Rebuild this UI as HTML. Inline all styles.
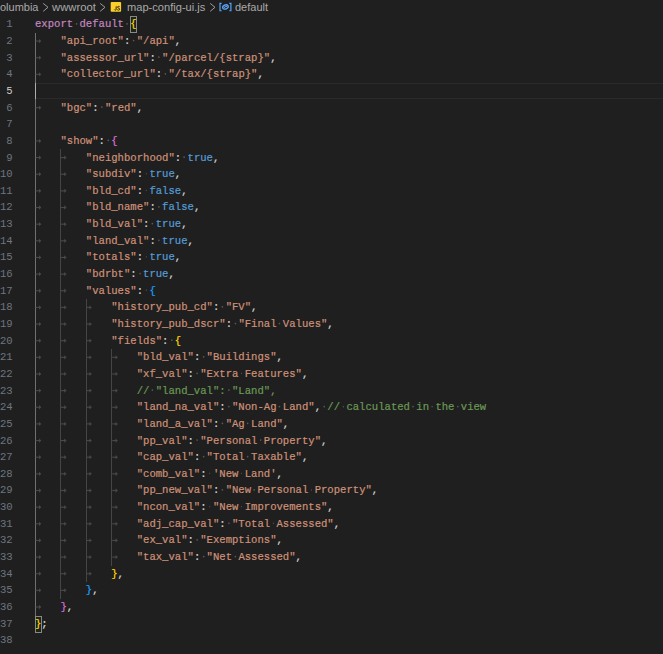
<!DOCTYPE html>
<html><head><meta charset="utf-8"><title>map-config-ui.js</title>
<style>
html,body{margin:0;padding:0;background:#1f1f1f;}
body{width:663px;height:654px;overflow:hidden;position:relative;font-family:"Liberation Sans",sans-serif;}
#ed{position:absolute;left:0;top:16px;width:813.89px;height:728.23px;transform-origin:0 0;transform:scale(0.8146110033172687,0.8761);
 font-family:"Liberation Mono",monospace;font-size:13.0px;line-height:19.0px;color:#d4d4d4;-webkit-text-stroke:0.25px;}
.ln{position:absolute;left:0;width:15.47px;text-align:right;color:#6e7681;height:19.0px;-webkit-text-stroke:0;}
.ln.a{color:#cccccc;}
.cl{position:absolute;left:42.97px;height:19.0px;white-space:pre;}
.cl span,.cl i{position:relative;top:0.0px}
.k{color:#c586c0} .s{color:#ce9178} .l{color:#569cd6} .c{color:#6a9955} .p{color:#d4d4d4}
.b1{color:#ffd700} .b2{color:#da70d6} .b3{color:#179fff}
.mb{position:absolute;width:7px;height:17px;box-sizing:border-box;border:1px solid #888;background:rgba(0,100,0,0.1);}
i{font-style:normal}
i.sp{display:inline-block;width:7.8013px;height:19.0px;vertical-align:top;position:relative;}
i.sp::after{content:"";position:absolute;left:3.05px;top:8.40px;width:1.7px;height:1.8px;background:#585858;border-radius:50%;}
i.tab{display:inline-block;width:31.2051px;height:19.0px;vertical-align:top;position:relative;}
i.tab svg{position:absolute;left:0;top:6px;display:block;overflow:visible;}
.g{position:absolute;width:1px;background:#454545;}
.g.a{background:#707070;}
#hl{position:absolute;left:35px;right:0;top:82.55px;height:16.7px;box-sizing:border-box;border-top:1.7px solid #2a2a2a;border-bottom:1.7px solid #2a2a2a;}
#cur{position:absolute;left:35px;top:83px;width:1.3px;height:16px;background:#aeafad;}
#bc{position:absolute;left:0;top:0;height:16px;width:663px;color:#a9a9a9;white-space:nowrap;overflow:hidden;}
.bt{position:absolute;top:-0.2px;font-size:11.7px;line-height:14px;height:14px;transform-origin:0 0;}
.bi{position:absolute;display:block;}
</style></head><body>

<div id="bc">
<span class="bt" style="left:0.04px;transform:scaleX(0.9387)">olumbia</span>
<svg class="bi" style="left:42.00px;top:2.3px" width="8" height="11" viewBox="0 0 8 11"><path d="M1.2 1.4 L6.0 5.3 L1.2 9.3" fill="none" stroke="#9c9c9c" stroke-width="1.0"/></svg>
<span class="bt" style="left:52.02px;transform:scaleX(0.9661)">wwwroot</span>
<svg class="bi" style="left:98.90px;top:2.3px" width="8" height="11" viewBox="0 0 8 11"><path d="M1.2 1.4 L6.0 5.3 L1.2 9.3" fill="none" stroke="#9c9c9c" stroke-width="1.0"/></svg>
<svg class="bi" style="left:110px;top:1px" width="12" height="12" viewBox="0 0 12 12"><rect x="0.7" y="0.9" width="10.4" height="9.8" rx="0.9" fill="#fdcf2c"/><path d="M6.15 5.3 V8.2 Q6.15 9.15 5.3 9.15 Q4.7 9.15 4.4 8.6" fill="none" stroke="#2b2405" stroke-width="1.0"/><path d="M9.7 5.9 Q9.3 5.3 8.5 5.35 Q7.5 5.45 7.55 6.2 Q7.6 6.9 8.6 7.15 Q9.7 7.45 9.65 8.25 Q9.6 9.1 8.6 9.15 Q7.7 9.15 7.2 8.5" fill="none" stroke="#2b2405" stroke-width="1.0"/></svg>
<span class="bt" style="left:127.46px;transform:scaleX(0.9499)">map-config-ui.js</span>
<svg class="bi" style="left:208.80px;top:2.3px" width="8" height="11" viewBox="0 0 8 11"><path d="M1.2 1.4 L6.0 5.3 L1.2 9.3" fill="none" stroke="#9c9c9c" stroke-width="1.0"/></svg>
<svg class="bi" style="left:218.8px;top:1.7px" width="14" height="10" viewBox="0 0 14 10"><path d="M2.6 1.3 H1.0 V8.7 H2.6 M10.3 1.3 H11.9 V8.7 H10.3" fill="none" stroke="#55a8ff" stroke-width="1.15"/><g transform="rotate(-24 6.45 5.0)"><ellipse cx="6.45" cy="5.0" rx="2.9" ry="2.0" fill="none" stroke="#5aabff" stroke-width="1.3"/><path d="M4.7 5.4 Q6.3 4.0 8.1 5.3" fill="none" stroke="#5aabff" stroke-width="0.9"/></g></svg>
<span class="bt" style="left:234.74px;transform:scaleX(0.9406)">default</span>
</div>
<div id="hl"></div>
<div class="mb" style="left:130px;top:16px"></div><div class="mb" style="left:35px;top:616px"></div>
<div class="g a" style="left:35px;top:32.90px;height:582.61px"></div>
<div class="g" style="left:60px;top:149.42px;height:449.44px"></div>
<div class="g" style="left:86px;top:299.23px;height:282.98px"></div>
<div class="g" style="left:111px;top:349.17px;height:216.40px"></div>
<div id="cur"></div>
<div id="ed">
<div id="deco" style="position:absolute;left:0;top:0.285px;width:100%;height:100%">
</div>
<div class="ln" style="top:0.0px">1</div><div class="cl" style="top:0.0px"><span class="k">export</span><i class="sp"> </i><span class="k">default</span><i class="sp"> </i><span class="b1">{</span></div>
<div class="ln" style="top:19.0px">2</div><div class="cl" style="top:19.0px"><i class="tab"><svg width="9" height="6" viewBox="0 0 9 6"><g transform="translate(0 0.6)"><path d="M0.8 3H6" stroke="#484848" stroke-width="1.3" fill="none"/><path d="M4.9 0.55L7.75 3L4.9 5.45Z" fill="#484848"/></g></svg></i><span class="s">"api_root"</span><span class="p">:</span><i class="sp"> </i><span class="s">"/api"</span><span class="p">,</span></div>
<div class="ln" style="top:38.0px">3</div><div class="cl" style="top:38.0px"><i class="tab"><svg width="9" height="6" viewBox="0 0 9 6"><g transform="translate(0 0.6)"><path d="M0.8 3H6" stroke="#484848" stroke-width="1.3" fill="none"/><path d="M4.9 0.55L7.75 3L4.9 5.45Z" fill="#484848"/></g></svg></i><span class="s">"assessor_url"</span><span class="p">:</span><i class="sp"> </i><span class="s">"/parcel/{strap}"</span><span class="p">,</span></div>
<div class="ln" style="top:57.0px">4</div><div class="cl" style="top:57.0px"><i class="tab"><svg width="9" height="6" viewBox="0 0 9 6"><g transform="translate(0 0.6)"><path d="M0.8 3H6" stroke="#484848" stroke-width="1.3" fill="none"/><path d="M4.9 0.55L7.75 3L4.9 5.45Z" fill="#484848"/></g></svg></i><span class="s">"collector_url"</span><span class="p">:</span><i class="sp"> </i><span class="s">"/tax/{strap}"</span><span class="p">,</span></div>
<div class="ln a" style="top:76.0px">5</div><div class="cl" style="top:76.0px"></div>
<div class="ln" style="top:95.0px">6</div><div class="cl" style="top:95.0px"><i class="tab"><svg width="9" height="6" viewBox="0 0 9 6"><g transform="translate(0 0.6)"><path d="M0.8 3H6" stroke="#484848" stroke-width="1.3" fill="none"/><path d="M4.9 0.55L7.75 3L4.9 5.45Z" fill="#484848"/></g></svg></i><span class="s">"bgc"</span><span class="p">:</span><i class="sp"> </i><span class="s">"red"</span><span class="p">,</span></div>
<div class="ln" style="top:114.0px">7</div><div class="cl" style="top:114.0px"></div>
<div class="ln" style="top:133.0px">8</div><div class="cl" style="top:133.0px"><i class="tab"><svg width="9" height="6" viewBox="0 0 9 6"><g transform="translate(0 0.6)"><path d="M0.8 3H6" stroke="#484848" stroke-width="1.3" fill="none"/><path d="M4.9 0.55L7.75 3L4.9 5.45Z" fill="#484848"/></g></svg></i><span class="s">"show"</span><span class="p">:</span><i class="sp"> </i><span class="b2">{</span></div>
<div class="ln" style="top:152.0px">9</div><div class="cl" style="top:152.0px"><i class="tab"><svg width="9" height="6" viewBox="0 0 9 6"><g transform="translate(0 0.6)"><path d="M0.8 3H6" stroke="#484848" stroke-width="1.3" fill="none"/><path d="M4.9 0.55L7.75 3L4.9 5.45Z" fill="#484848"/></g></svg></i><i class="tab"><svg width="9" height="6" viewBox="0 0 9 6"><g transform="translate(0 0.6)"><path d="M0.8 3H6" stroke="#484848" stroke-width="1.3" fill="none"/><path d="M4.9 0.55L7.75 3L4.9 5.45Z" fill="#484848"/></g></svg></i><span class="s">"neighborhood"</span><span class="p">:</span><i class="sp"> </i><span class="l">true</span><span class="p">,</span></div>
<div class="ln" style="top:171.0px">10</div><div class="cl" style="top:171.0px"><i class="tab"><svg width="9" height="6" viewBox="0 0 9 6"><g transform="translate(0 0.6)"><path d="M0.8 3H6" stroke="#484848" stroke-width="1.3" fill="none"/><path d="M4.9 0.55L7.75 3L4.9 5.45Z" fill="#484848"/></g></svg></i><i class="tab"><svg width="9" height="6" viewBox="0 0 9 6"><g transform="translate(0 0.6)"><path d="M0.8 3H6" stroke="#484848" stroke-width="1.3" fill="none"/><path d="M4.9 0.55L7.75 3L4.9 5.45Z" fill="#484848"/></g></svg></i><span class="s">"subdiv"</span><span class="p">:</span><i class="sp"> </i><span class="l">true</span><span class="p">,</span></div>
<div class="ln" style="top:190.0px">11</div><div class="cl" style="top:190.0px"><i class="tab"><svg width="9" height="6" viewBox="0 0 9 6"><g transform="translate(0 0.6)"><path d="M0.8 3H6" stroke="#484848" stroke-width="1.3" fill="none"/><path d="M4.9 0.55L7.75 3L4.9 5.45Z" fill="#484848"/></g></svg></i><i class="tab"><svg width="9" height="6" viewBox="0 0 9 6"><g transform="translate(0 0.6)"><path d="M0.8 3H6" stroke="#484848" stroke-width="1.3" fill="none"/><path d="M4.9 0.55L7.75 3L4.9 5.45Z" fill="#484848"/></g></svg></i><span class="s">"bld_cd"</span><span class="p">:</span><i class="sp"> </i><span class="l">false</span><span class="p">,</span></div>
<div class="ln" style="top:209.0px">12</div><div class="cl" style="top:209.0px"><i class="tab"><svg width="9" height="6" viewBox="0 0 9 6"><g transform="translate(0 0.6)"><path d="M0.8 3H6" stroke="#484848" stroke-width="1.3" fill="none"/><path d="M4.9 0.55L7.75 3L4.9 5.45Z" fill="#484848"/></g></svg></i><i class="tab"><svg width="9" height="6" viewBox="0 0 9 6"><g transform="translate(0 0.6)"><path d="M0.8 3H6" stroke="#484848" stroke-width="1.3" fill="none"/><path d="M4.9 0.55L7.75 3L4.9 5.45Z" fill="#484848"/></g></svg></i><span class="s">"bld_name"</span><span class="p">:</span><i class="sp"> </i><span class="l">false</span><span class="p">,</span></div>
<div class="ln" style="top:228.0px">13</div><div class="cl" style="top:228.0px"><i class="tab"><svg width="9" height="6" viewBox="0 0 9 6"><g transform="translate(0 0.6)"><path d="M0.8 3H6" stroke="#484848" stroke-width="1.3" fill="none"/><path d="M4.9 0.55L7.75 3L4.9 5.45Z" fill="#484848"/></g></svg></i><i class="tab"><svg width="9" height="6" viewBox="0 0 9 6"><g transform="translate(0 0.6)"><path d="M0.8 3H6" stroke="#484848" stroke-width="1.3" fill="none"/><path d="M4.9 0.55L7.75 3L4.9 5.45Z" fill="#484848"/></g></svg></i><span class="s">"bld_val"</span><span class="p">:</span><i class="sp"> </i><span class="l">true</span><span class="p">,</span></div>
<div class="ln" style="top:247.0px">14</div><div class="cl" style="top:247.0px"><i class="tab"><svg width="9" height="6" viewBox="0 0 9 6"><g transform="translate(0 0.6)"><path d="M0.8 3H6" stroke="#484848" stroke-width="1.3" fill="none"/><path d="M4.9 0.55L7.75 3L4.9 5.45Z" fill="#484848"/></g></svg></i><i class="tab"><svg width="9" height="6" viewBox="0 0 9 6"><g transform="translate(0 0.6)"><path d="M0.8 3H6" stroke="#484848" stroke-width="1.3" fill="none"/><path d="M4.9 0.55L7.75 3L4.9 5.45Z" fill="#484848"/></g></svg></i><span class="s">"land_val"</span><span class="p">:</span><i class="sp"> </i><span class="l">true</span><span class="p">,</span></div>
<div class="ln" style="top:266.0px">15</div><div class="cl" style="top:266.0px"><i class="tab"><svg width="9" height="6" viewBox="0 0 9 6"><g transform="translate(0 0.6)"><path d="M0.8 3H6" stroke="#484848" stroke-width="1.3" fill="none"/><path d="M4.9 0.55L7.75 3L4.9 5.45Z" fill="#484848"/></g></svg></i><i class="tab"><svg width="9" height="6" viewBox="0 0 9 6"><g transform="translate(0 0.6)"><path d="M0.8 3H6" stroke="#484848" stroke-width="1.3" fill="none"/><path d="M4.9 0.55L7.75 3L4.9 5.45Z" fill="#484848"/></g></svg></i><span class="s">"totals"</span><span class="p">:</span><i class="sp"> </i><span class="l">true</span><span class="p">,</span></div>
<div class="ln" style="top:285.0px">16</div><div class="cl" style="top:285.0px"><i class="tab"><svg width="9" height="6" viewBox="0 0 9 6"><g transform="translate(0 0.6)"><path d="M0.8 3H6" stroke="#484848" stroke-width="1.3" fill="none"/><path d="M4.9 0.55L7.75 3L4.9 5.45Z" fill="#484848"/></g></svg></i><i class="tab"><svg width="9" height="6" viewBox="0 0 9 6"><g transform="translate(0 0.6)"><path d="M0.8 3H6" stroke="#484848" stroke-width="1.3" fill="none"/><path d="M4.9 0.55L7.75 3L4.9 5.45Z" fill="#484848"/></g></svg></i><span class="s">"bdrbt"</span><span class="p">:</span><i class="sp"> </i><span class="l">true</span><span class="p">,</span></div>
<div class="ln" style="top:304.0px">17</div><div class="cl" style="top:304.0px"><i class="tab"><svg width="9" height="6" viewBox="0 0 9 6"><g transform="translate(0 0.6)"><path d="M0.8 3H6" stroke="#484848" stroke-width="1.3" fill="none"/><path d="M4.9 0.55L7.75 3L4.9 5.45Z" fill="#484848"/></g></svg></i><i class="tab"><svg width="9" height="6" viewBox="0 0 9 6"><g transform="translate(0 0.6)"><path d="M0.8 3H6" stroke="#484848" stroke-width="1.3" fill="none"/><path d="M4.9 0.55L7.75 3L4.9 5.45Z" fill="#484848"/></g></svg></i><span class="s">"values"</span><span class="p">:</span><i class="sp"> </i><span class="b3">{</span></div>
<div class="ln" style="top:323.0px">18</div><div class="cl" style="top:323.0px"><i class="tab"><svg width="9" height="6" viewBox="0 0 9 6"><g transform="translate(0 0.6)"><path d="M0.8 3H6" stroke="#484848" stroke-width="1.3" fill="none"/><path d="M4.9 0.55L7.75 3L4.9 5.45Z" fill="#484848"/></g></svg></i><i class="tab"><svg width="9" height="6" viewBox="0 0 9 6"><g transform="translate(0 0.6)"><path d="M0.8 3H6" stroke="#484848" stroke-width="1.3" fill="none"/><path d="M4.9 0.55L7.75 3L4.9 5.45Z" fill="#484848"/></g></svg></i><i class="tab"><svg width="9" height="6" viewBox="0 0 9 6"><g transform="translate(0 0.6)"><path d="M0.8 3H6" stroke="#484848" stroke-width="1.3" fill="none"/><path d="M4.9 0.55L7.75 3L4.9 5.45Z" fill="#484848"/></g></svg></i><span class="s">"history_pub_cd"</span><span class="p">:</span><i class="sp"> </i><span class="s">"FV"</span><span class="p">,</span></div>
<div class="ln" style="top:342.0px">19</div><div class="cl" style="top:342.0px"><i class="tab"><svg width="9" height="6" viewBox="0 0 9 6"><g transform="translate(0 0.6)"><path d="M0.8 3H6" stroke="#484848" stroke-width="1.3" fill="none"/><path d="M4.9 0.55L7.75 3L4.9 5.45Z" fill="#484848"/></g></svg></i><i class="tab"><svg width="9" height="6" viewBox="0 0 9 6"><g transform="translate(0 0.6)"><path d="M0.8 3H6" stroke="#484848" stroke-width="1.3" fill="none"/><path d="M4.9 0.55L7.75 3L4.9 5.45Z" fill="#484848"/></g></svg></i><i class="tab"><svg width="9" height="6" viewBox="0 0 9 6"><g transform="translate(0 0.6)"><path d="M0.8 3H6" stroke="#484848" stroke-width="1.3" fill="none"/><path d="M4.9 0.55L7.75 3L4.9 5.45Z" fill="#484848"/></g></svg></i><span class="s">"history_pub_dscr"</span><span class="p">:</span><i class="sp"> </i><span class="s">"Final</span><i class="sp"> </i><span class="s">Values"</span><span class="p">,</span></div>
<div class="ln" style="top:361.0px">20</div><div class="cl" style="top:361.0px"><i class="tab"><svg width="9" height="6" viewBox="0 0 9 6"><g transform="translate(0 0.6)"><path d="M0.8 3H6" stroke="#484848" stroke-width="1.3" fill="none"/><path d="M4.9 0.55L7.75 3L4.9 5.45Z" fill="#484848"/></g></svg></i><i class="tab"><svg width="9" height="6" viewBox="0 0 9 6"><g transform="translate(0 0.6)"><path d="M0.8 3H6" stroke="#484848" stroke-width="1.3" fill="none"/><path d="M4.9 0.55L7.75 3L4.9 5.45Z" fill="#484848"/></g></svg></i><i class="tab"><svg width="9" height="6" viewBox="0 0 9 6"><g transform="translate(0 0.6)"><path d="M0.8 3H6" stroke="#484848" stroke-width="1.3" fill="none"/><path d="M4.9 0.55L7.75 3L4.9 5.45Z" fill="#484848"/></g></svg></i><span class="s">"fields"</span><span class="p">:</span><i class="sp"> </i><span class="b1">{</span></div>
<div class="ln" style="top:380.0px">21</div><div class="cl" style="top:380.0px"><i class="tab"><svg width="9" height="6" viewBox="0 0 9 6"><g transform="translate(0 0.6)"><path d="M0.8 3H6" stroke="#484848" stroke-width="1.3" fill="none"/><path d="M4.9 0.55L7.75 3L4.9 5.45Z" fill="#484848"/></g></svg></i><i class="tab"><svg width="9" height="6" viewBox="0 0 9 6"><g transform="translate(0 0.6)"><path d="M0.8 3H6" stroke="#484848" stroke-width="1.3" fill="none"/><path d="M4.9 0.55L7.75 3L4.9 5.45Z" fill="#484848"/></g></svg></i><i class="tab"><svg width="9" height="6" viewBox="0 0 9 6"><g transform="translate(0 0.6)"><path d="M0.8 3H6" stroke="#484848" stroke-width="1.3" fill="none"/><path d="M4.9 0.55L7.75 3L4.9 5.45Z" fill="#484848"/></g></svg></i><i class="tab"><svg width="9" height="6" viewBox="0 0 9 6"><g transform="translate(0 0.6)"><path d="M0.8 3H6" stroke="#484848" stroke-width="1.3" fill="none"/><path d="M4.9 0.55L7.75 3L4.9 5.45Z" fill="#484848"/></g></svg></i><span class="s">"bld_val"</span><span class="p">:</span><i class="sp"> </i><span class="s">"Buildings"</span><span class="p">,</span></div>
<div class="ln" style="top:399.0px">22</div><div class="cl" style="top:399.0px"><i class="tab"><svg width="9" height="6" viewBox="0 0 9 6"><g transform="translate(0 0.6)"><path d="M0.8 3H6" stroke="#484848" stroke-width="1.3" fill="none"/><path d="M4.9 0.55L7.75 3L4.9 5.45Z" fill="#484848"/></g></svg></i><i class="tab"><svg width="9" height="6" viewBox="0 0 9 6"><g transform="translate(0 0.6)"><path d="M0.8 3H6" stroke="#484848" stroke-width="1.3" fill="none"/><path d="M4.9 0.55L7.75 3L4.9 5.45Z" fill="#484848"/></g></svg></i><i class="tab"><svg width="9" height="6" viewBox="0 0 9 6"><g transform="translate(0 0.6)"><path d="M0.8 3H6" stroke="#484848" stroke-width="1.3" fill="none"/><path d="M4.9 0.55L7.75 3L4.9 5.45Z" fill="#484848"/></g></svg></i><i class="tab"><svg width="9" height="6" viewBox="0 0 9 6"><g transform="translate(0 0.6)"><path d="M0.8 3H6" stroke="#484848" stroke-width="1.3" fill="none"/><path d="M4.9 0.55L7.75 3L4.9 5.45Z" fill="#484848"/></g></svg></i><span class="s">"xf_val"</span><span class="p">:</span><i class="sp"> </i><span class="s">"Extra</span><i class="sp"> </i><span class="s">Features"</span><span class="p">,</span></div>
<div class="ln" style="top:418.0px">23</div><div class="cl" style="top:418.0px"><i class="tab"><svg width="9" height="6" viewBox="0 0 9 6"><g transform="translate(0 0.6)"><path d="M0.8 3H6" stroke="#484848" stroke-width="1.3" fill="none"/><path d="M4.9 0.55L7.75 3L4.9 5.45Z" fill="#484848"/></g></svg></i><i class="tab"><svg width="9" height="6" viewBox="0 0 9 6"><g transform="translate(0 0.6)"><path d="M0.8 3H6" stroke="#484848" stroke-width="1.3" fill="none"/><path d="M4.9 0.55L7.75 3L4.9 5.45Z" fill="#484848"/></g></svg></i><i class="tab"><svg width="9" height="6" viewBox="0 0 9 6"><g transform="translate(0 0.6)"><path d="M0.8 3H6" stroke="#484848" stroke-width="1.3" fill="none"/><path d="M4.9 0.55L7.75 3L4.9 5.45Z" fill="#484848"/></g></svg></i><i class="tab"><svg width="9" height="6" viewBox="0 0 9 6"><g transform="translate(0 0.6)"><path d="M0.8 3H6" stroke="#484848" stroke-width="1.3" fill="none"/><path d="M4.9 0.55L7.75 3L4.9 5.45Z" fill="#484848"/></g></svg></i><span class="c">//</span><i class="sp"> </i><span class="c">"land_val":</span><i class="sp"> </i><span class="c">"Land",</span></div>
<div class="ln" style="top:437.0px">24</div><div class="cl" style="top:437.0px"><i class="tab"><svg width="9" height="6" viewBox="0 0 9 6"><g transform="translate(0 0.6)"><path d="M0.8 3H6" stroke="#484848" stroke-width="1.3" fill="none"/><path d="M4.9 0.55L7.75 3L4.9 5.45Z" fill="#484848"/></g></svg></i><i class="tab"><svg width="9" height="6" viewBox="0 0 9 6"><g transform="translate(0 0.6)"><path d="M0.8 3H6" stroke="#484848" stroke-width="1.3" fill="none"/><path d="M4.9 0.55L7.75 3L4.9 5.45Z" fill="#484848"/></g></svg></i><i class="tab"><svg width="9" height="6" viewBox="0 0 9 6"><g transform="translate(0 0.6)"><path d="M0.8 3H6" stroke="#484848" stroke-width="1.3" fill="none"/><path d="M4.9 0.55L7.75 3L4.9 5.45Z" fill="#484848"/></g></svg></i><i class="tab"><svg width="9" height="6" viewBox="0 0 9 6"><g transform="translate(0 0.6)"><path d="M0.8 3H6" stroke="#484848" stroke-width="1.3" fill="none"/><path d="M4.9 0.55L7.75 3L4.9 5.45Z" fill="#484848"/></g></svg></i><span class="s">"land_na_val"</span><span class="p">:</span><i class="sp"> </i><span class="s">"Non-Ag</span><i class="sp"> </i><span class="s">Land"</span><span class="p">,</span><i class="sp"> </i><span class="c">//</span><i class="sp"> </i><span class="c">calculated</span><i class="sp"> </i><span class="c">in</span><i class="sp"> </i><span class="c">the</span><i class="sp"> </i><span class="c">view</span></div>
<div class="ln" style="top:456.0px">25</div><div class="cl" style="top:456.0px"><i class="tab"><svg width="9" height="6" viewBox="0 0 9 6"><g transform="translate(0 0.6)"><path d="M0.8 3H6" stroke="#484848" stroke-width="1.3" fill="none"/><path d="M4.9 0.55L7.75 3L4.9 5.45Z" fill="#484848"/></g></svg></i><i class="tab"><svg width="9" height="6" viewBox="0 0 9 6"><g transform="translate(0 0.6)"><path d="M0.8 3H6" stroke="#484848" stroke-width="1.3" fill="none"/><path d="M4.9 0.55L7.75 3L4.9 5.45Z" fill="#484848"/></g></svg></i><i class="tab"><svg width="9" height="6" viewBox="0 0 9 6"><g transform="translate(0 0.6)"><path d="M0.8 3H6" stroke="#484848" stroke-width="1.3" fill="none"/><path d="M4.9 0.55L7.75 3L4.9 5.45Z" fill="#484848"/></g></svg></i><i class="tab"><svg width="9" height="6" viewBox="0 0 9 6"><g transform="translate(0 0.6)"><path d="M0.8 3H6" stroke="#484848" stroke-width="1.3" fill="none"/><path d="M4.9 0.55L7.75 3L4.9 5.45Z" fill="#484848"/></g></svg></i><span class="s">"land_a_val"</span><span class="p">:</span><i class="sp"> </i><span class="s">"Ag</span><i class="sp"> </i><span class="s">Land"</span><span class="p">,</span></div>
<div class="ln" style="top:475.0px">26</div><div class="cl" style="top:475.0px"><i class="tab"><svg width="9" height="6" viewBox="0 0 9 6"><g transform="translate(0 0.6)"><path d="M0.8 3H6" stroke="#484848" stroke-width="1.3" fill="none"/><path d="M4.9 0.55L7.75 3L4.9 5.45Z" fill="#484848"/></g></svg></i><i class="tab"><svg width="9" height="6" viewBox="0 0 9 6"><g transform="translate(0 0.6)"><path d="M0.8 3H6" stroke="#484848" stroke-width="1.3" fill="none"/><path d="M4.9 0.55L7.75 3L4.9 5.45Z" fill="#484848"/></g></svg></i><i class="tab"><svg width="9" height="6" viewBox="0 0 9 6"><g transform="translate(0 0.6)"><path d="M0.8 3H6" stroke="#484848" stroke-width="1.3" fill="none"/><path d="M4.9 0.55L7.75 3L4.9 5.45Z" fill="#484848"/></g></svg></i><i class="tab"><svg width="9" height="6" viewBox="0 0 9 6"><g transform="translate(0 0.6)"><path d="M0.8 3H6" stroke="#484848" stroke-width="1.3" fill="none"/><path d="M4.9 0.55L7.75 3L4.9 5.45Z" fill="#484848"/></g></svg></i><span class="s">"pp_val"</span><span class="p">:</span><i class="sp"> </i><span class="s">"Personal</span><i class="sp"> </i><span class="s">Property"</span><span class="p">,</span></div>
<div class="ln" style="top:494.0px">27</div><div class="cl" style="top:494.0px"><i class="tab"><svg width="9" height="6" viewBox="0 0 9 6"><g transform="translate(0 0.6)"><path d="M0.8 3H6" stroke="#484848" stroke-width="1.3" fill="none"/><path d="M4.9 0.55L7.75 3L4.9 5.45Z" fill="#484848"/></g></svg></i><i class="tab"><svg width="9" height="6" viewBox="0 0 9 6"><g transform="translate(0 0.6)"><path d="M0.8 3H6" stroke="#484848" stroke-width="1.3" fill="none"/><path d="M4.9 0.55L7.75 3L4.9 5.45Z" fill="#484848"/></g></svg></i><i class="tab"><svg width="9" height="6" viewBox="0 0 9 6"><g transform="translate(0 0.6)"><path d="M0.8 3H6" stroke="#484848" stroke-width="1.3" fill="none"/><path d="M4.9 0.55L7.75 3L4.9 5.45Z" fill="#484848"/></g></svg></i><i class="tab"><svg width="9" height="6" viewBox="0 0 9 6"><g transform="translate(0 0.6)"><path d="M0.8 3H6" stroke="#484848" stroke-width="1.3" fill="none"/><path d="M4.9 0.55L7.75 3L4.9 5.45Z" fill="#484848"/></g></svg></i><span class="s">"cap_val"</span><span class="p">:</span><i class="sp"> </i><span class="s">"Total</span><i class="sp"> </i><span class="s">Taxable"</span><span class="p">,</span></div>
<div class="ln" style="top:513.0px">28</div><div class="cl" style="top:513.0px"><i class="tab"><svg width="9" height="6" viewBox="0 0 9 6"><g transform="translate(0 0.6)"><path d="M0.8 3H6" stroke="#484848" stroke-width="1.3" fill="none"/><path d="M4.9 0.55L7.75 3L4.9 5.45Z" fill="#484848"/></g></svg></i><i class="tab"><svg width="9" height="6" viewBox="0 0 9 6"><g transform="translate(0 0.6)"><path d="M0.8 3H6" stroke="#484848" stroke-width="1.3" fill="none"/><path d="M4.9 0.55L7.75 3L4.9 5.45Z" fill="#484848"/></g></svg></i><i class="tab"><svg width="9" height="6" viewBox="0 0 9 6"><g transform="translate(0 0.6)"><path d="M0.8 3H6" stroke="#484848" stroke-width="1.3" fill="none"/><path d="M4.9 0.55L7.75 3L4.9 5.45Z" fill="#484848"/></g></svg></i><i class="tab"><svg width="9" height="6" viewBox="0 0 9 6"><g transform="translate(0 0.6)"><path d="M0.8 3H6" stroke="#484848" stroke-width="1.3" fill="none"/><path d="M4.9 0.55L7.75 3L4.9 5.45Z" fill="#484848"/></g></svg></i><span class="s">"comb_val"</span><span class="p">:</span><i class="sp"> </i><span class="s">'New</span><i class="sp"> </i><span class="s">Land'</span><span class="p">,</span></div>
<div class="ln" style="top:532.0px">29</div><div class="cl" style="top:532.0px"><i class="tab"><svg width="9" height="6" viewBox="0 0 9 6"><g transform="translate(0 0.6)"><path d="M0.8 3H6" stroke="#484848" stroke-width="1.3" fill="none"/><path d="M4.9 0.55L7.75 3L4.9 5.45Z" fill="#484848"/></g></svg></i><i class="tab"><svg width="9" height="6" viewBox="0 0 9 6"><g transform="translate(0 0.6)"><path d="M0.8 3H6" stroke="#484848" stroke-width="1.3" fill="none"/><path d="M4.9 0.55L7.75 3L4.9 5.45Z" fill="#484848"/></g></svg></i><i class="tab"><svg width="9" height="6" viewBox="0 0 9 6"><g transform="translate(0 0.6)"><path d="M0.8 3H6" stroke="#484848" stroke-width="1.3" fill="none"/><path d="M4.9 0.55L7.75 3L4.9 5.45Z" fill="#484848"/></g></svg></i><i class="tab"><svg width="9" height="6" viewBox="0 0 9 6"><g transform="translate(0 0.6)"><path d="M0.8 3H6" stroke="#484848" stroke-width="1.3" fill="none"/><path d="M4.9 0.55L7.75 3L4.9 5.45Z" fill="#484848"/></g></svg></i><span class="s">"pp_new_val"</span><span class="p">:</span><i class="sp"> </i><span class="s">"New</span><i class="sp"> </i><span class="s">Personal</span><i class="sp"> </i><span class="s">Property"</span><span class="p">,</span></div>
<div class="ln" style="top:551.0px">30</div><div class="cl" style="top:551.0px"><i class="tab"><svg width="9" height="6" viewBox="0 0 9 6"><g transform="translate(0 0.6)"><path d="M0.8 3H6" stroke="#484848" stroke-width="1.3" fill="none"/><path d="M4.9 0.55L7.75 3L4.9 5.45Z" fill="#484848"/></g></svg></i><i class="tab"><svg width="9" height="6" viewBox="0 0 9 6"><g transform="translate(0 0.6)"><path d="M0.8 3H6" stroke="#484848" stroke-width="1.3" fill="none"/><path d="M4.9 0.55L7.75 3L4.9 5.45Z" fill="#484848"/></g></svg></i><i class="tab"><svg width="9" height="6" viewBox="0 0 9 6"><g transform="translate(0 0.6)"><path d="M0.8 3H6" stroke="#484848" stroke-width="1.3" fill="none"/><path d="M4.9 0.55L7.75 3L4.9 5.45Z" fill="#484848"/></g></svg></i><i class="tab"><svg width="9" height="6" viewBox="0 0 9 6"><g transform="translate(0 0.6)"><path d="M0.8 3H6" stroke="#484848" stroke-width="1.3" fill="none"/><path d="M4.9 0.55L7.75 3L4.9 5.45Z" fill="#484848"/></g></svg></i><span class="s">"ncon_val"</span><span class="p">:</span><i class="sp"> </i><span class="s">"New</span><i class="sp"> </i><span class="s">Improvements"</span><span class="p">,</span></div>
<div class="ln" style="top:570.0px">31</div><div class="cl" style="top:570.0px"><i class="tab"><svg width="9" height="6" viewBox="0 0 9 6"><g transform="translate(0 0.6)"><path d="M0.8 3H6" stroke="#484848" stroke-width="1.3" fill="none"/><path d="M4.9 0.55L7.75 3L4.9 5.45Z" fill="#484848"/></g></svg></i><i class="tab"><svg width="9" height="6" viewBox="0 0 9 6"><g transform="translate(0 0.6)"><path d="M0.8 3H6" stroke="#484848" stroke-width="1.3" fill="none"/><path d="M4.9 0.55L7.75 3L4.9 5.45Z" fill="#484848"/></g></svg></i><i class="tab"><svg width="9" height="6" viewBox="0 0 9 6"><g transform="translate(0 0.6)"><path d="M0.8 3H6" stroke="#484848" stroke-width="1.3" fill="none"/><path d="M4.9 0.55L7.75 3L4.9 5.45Z" fill="#484848"/></g></svg></i><i class="tab"><svg width="9" height="6" viewBox="0 0 9 6"><g transform="translate(0 0.6)"><path d="M0.8 3H6" stroke="#484848" stroke-width="1.3" fill="none"/><path d="M4.9 0.55L7.75 3L4.9 5.45Z" fill="#484848"/></g></svg></i><span class="s">"adj_cap_val"</span><span class="p">:</span><i class="sp"> </i><span class="s">"Total</span><i class="sp"> </i><span class="s">Assessed"</span><span class="p">,</span></div>
<div class="ln" style="top:589.0px">32</div><div class="cl" style="top:589.0px"><i class="tab"><svg width="9" height="6" viewBox="0 0 9 6"><g transform="translate(0 0.6)"><path d="M0.8 3H6" stroke="#484848" stroke-width="1.3" fill="none"/><path d="M4.9 0.55L7.75 3L4.9 5.45Z" fill="#484848"/></g></svg></i><i class="tab"><svg width="9" height="6" viewBox="0 0 9 6"><g transform="translate(0 0.6)"><path d="M0.8 3H6" stroke="#484848" stroke-width="1.3" fill="none"/><path d="M4.9 0.55L7.75 3L4.9 5.45Z" fill="#484848"/></g></svg></i><i class="tab"><svg width="9" height="6" viewBox="0 0 9 6"><g transform="translate(0 0.6)"><path d="M0.8 3H6" stroke="#484848" stroke-width="1.3" fill="none"/><path d="M4.9 0.55L7.75 3L4.9 5.45Z" fill="#484848"/></g></svg></i><i class="tab"><svg width="9" height="6" viewBox="0 0 9 6"><g transform="translate(0 0.6)"><path d="M0.8 3H6" stroke="#484848" stroke-width="1.3" fill="none"/><path d="M4.9 0.55L7.75 3L4.9 5.45Z" fill="#484848"/></g></svg></i><span class="s">"ex_val"</span><span class="p">:</span><i class="sp"> </i><span class="s">"Exemptions"</span><span class="p">,</span></div>
<div class="ln" style="top:608.0px">33</div><div class="cl" style="top:608.0px"><i class="tab"><svg width="9" height="6" viewBox="0 0 9 6"><g transform="translate(0 0.6)"><path d="M0.8 3H6" stroke="#484848" stroke-width="1.3" fill="none"/><path d="M4.9 0.55L7.75 3L4.9 5.45Z" fill="#484848"/></g></svg></i><i class="tab"><svg width="9" height="6" viewBox="0 0 9 6"><g transform="translate(0 0.6)"><path d="M0.8 3H6" stroke="#484848" stroke-width="1.3" fill="none"/><path d="M4.9 0.55L7.75 3L4.9 5.45Z" fill="#484848"/></g></svg></i><i class="tab"><svg width="9" height="6" viewBox="0 0 9 6"><g transform="translate(0 0.6)"><path d="M0.8 3H6" stroke="#484848" stroke-width="1.3" fill="none"/><path d="M4.9 0.55L7.75 3L4.9 5.45Z" fill="#484848"/></g></svg></i><i class="tab"><svg width="9" height="6" viewBox="0 0 9 6"><g transform="translate(0 0.6)"><path d="M0.8 3H6" stroke="#484848" stroke-width="1.3" fill="none"/><path d="M4.9 0.55L7.75 3L4.9 5.45Z" fill="#484848"/></g></svg></i><span class="s">"tax_val"</span><span class="p">:</span><i class="sp"> </i><span class="s">"Net</span><i class="sp"> </i><span class="s">Assessed"</span><span class="p">,</span></div>
<div class="ln" style="top:627.0px">34</div><div class="cl" style="top:627.0px"><i class="tab"><svg width="9" height="6" viewBox="0 0 9 6"><g transform="translate(0 0.6)"><path d="M0.8 3H6" stroke="#484848" stroke-width="1.3" fill="none"/><path d="M4.9 0.55L7.75 3L4.9 5.45Z" fill="#484848"/></g></svg></i><i class="tab"><svg width="9" height="6" viewBox="0 0 9 6"><g transform="translate(0 0.6)"><path d="M0.8 3H6" stroke="#484848" stroke-width="1.3" fill="none"/><path d="M4.9 0.55L7.75 3L4.9 5.45Z" fill="#484848"/></g></svg></i><i class="tab"><svg width="9" height="6" viewBox="0 0 9 6"><g transform="translate(0 0.6)"><path d="M0.8 3H6" stroke="#484848" stroke-width="1.3" fill="none"/><path d="M4.9 0.55L7.75 3L4.9 5.45Z" fill="#484848"/></g></svg></i><span class="b1">}</span><span class="p">,</span></div>
<div class="ln" style="top:646.0px">35</div><div class="cl" style="top:646.0px"><i class="tab"><svg width="9" height="6" viewBox="0 0 9 6"><g transform="translate(0 0.6)"><path d="M0.8 3H6" stroke="#484848" stroke-width="1.3" fill="none"/><path d="M4.9 0.55L7.75 3L4.9 5.45Z" fill="#484848"/></g></svg></i><i class="tab"><svg width="9" height="6" viewBox="0 0 9 6"><g transform="translate(0 0.6)"><path d="M0.8 3H6" stroke="#484848" stroke-width="1.3" fill="none"/><path d="M4.9 0.55L7.75 3L4.9 5.45Z" fill="#484848"/></g></svg></i><span class="b3">}</span><span class="p">,</span></div>
<div class="ln" style="top:665.0px">36</div><div class="cl" style="top:665.0px"><i class="tab"><svg width="9" height="6" viewBox="0 0 9 6"><g transform="translate(0 0.6)"><path d="M0.8 3H6" stroke="#484848" stroke-width="1.3" fill="none"/><path d="M4.9 0.55L7.75 3L4.9 5.45Z" fill="#484848"/></g></svg></i><span class="b2">}</span><span class="p">,</span></div>
<div class="ln" style="top:684.0px">37</div><div class="cl" style="top:684.0px"><span class="b1">}</span><span class="p">;</span></div>
<div class="ln" style="top:703.0px">38</div><div class="cl" style="top:703.0px"></div>
</div>
</body></html>
